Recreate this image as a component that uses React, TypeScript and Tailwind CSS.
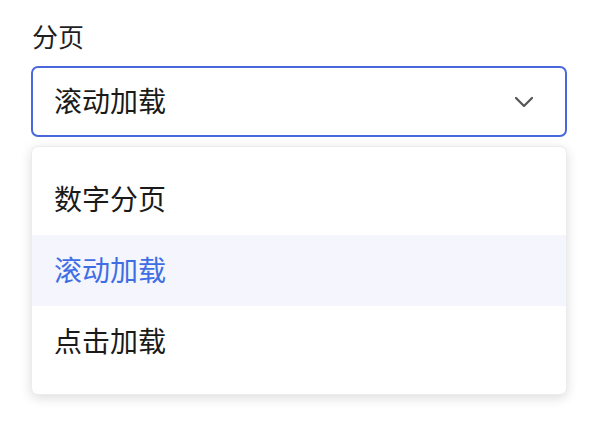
const options = ["数字分页", "滚动加载", "点击加载"];

export default function App() {
  const selected = "滚动加载";
  return (
    <div
      className="w-[598px] h-[428px] bg-white px-[31px] pt-[18px]"
      style={{ fontFamily: '"Noto Sans CJK SC", "Noto Sans", sans-serif' }}
    >
      <div className="text-[26px] leading-[36px] text-[#1f1f1f] pl-px">分页</div>
      <div className="mt-[12px] h-[71px] rounded-[7px] border-2 border-[#4a67dc] flex items-center justify-between pl-[21px] pr-[31px]">
        <span className="text-[28px] leading-[36px] text-[#1a1a1a] -mt-[3px]">{selected}</span>
        <svg width="20" height="12" viewBox="0 0 20 12" fill="none">
          <path d="M2 2l8 8 8-8" stroke="#555" strokeWidth="2.2" strokeLinecap="round" strokeLinejoin="round" />
        </svg>
      </div>
      <div className="mt-[9px] rounded-[7px] bg-white py-[17px] shadow-[0_3px_12px_rgba(0,0,0,0.14)] border border-[#ececec]">
        {options.map((o) => (
          <div
            key={o}
            className={`h-[71px] flex items-center pl-[22px] text-[28px] leading-[36px] ${
              o === selected ? "bg-[#f4f5fd] text-[#3f6ee4]" : "text-[#1a1a1a]"
            }`}
          >
            <span className="-mt-[3px]">{o}</span>
          </div>
        ))}
      </div>
    </div>
  );
}
